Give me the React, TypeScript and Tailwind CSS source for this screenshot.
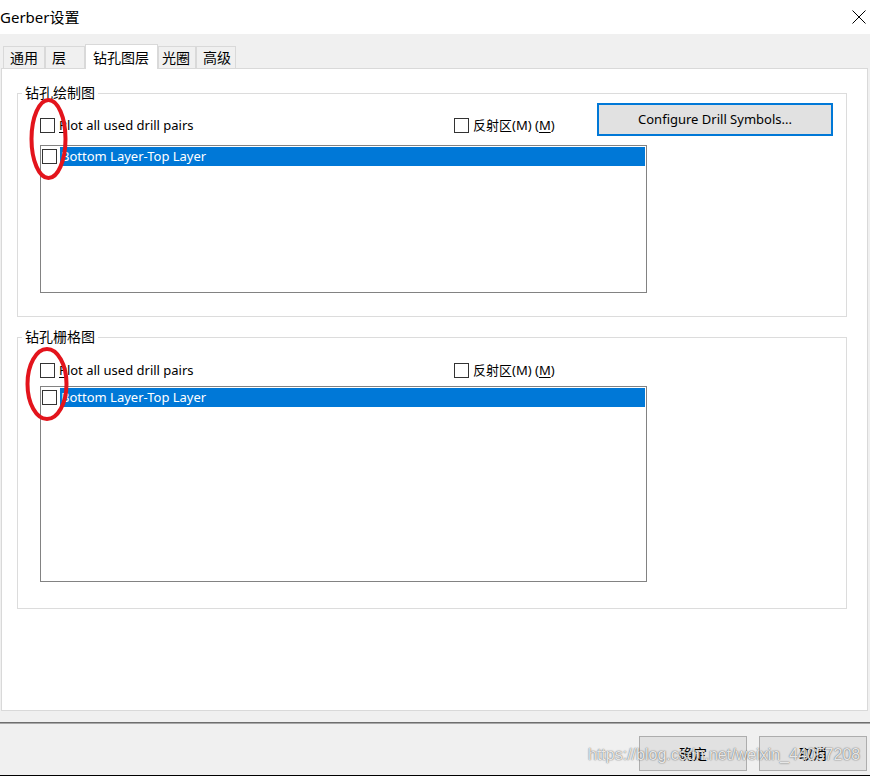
import React from "react";

type TabItem = {
  label: string;
  width: string;
  pad: string;
  active?: boolean;
};

const tabs: TabItem[] = [
  { label: "通用", width: "w-[42px]", pad: "pl-[6px]" },
  { label: "层", width: "w-[40px]", pad: "pl-[6px]" },
  { label: "钻孔图层", width: "w-[73px]", pad: "pl-[7px]", active: true },
  { label: "光圈", width: "w-[38px]", pad: "pl-[3px]" },
  { label: "高级", width: "w-[40px]", pad: "pl-[6px]" },
];

function CheckBox() {
  return <span className="inline-block h-[15px] w-[15px] shrink-0 border border-[#333333] bg-white" />;
}

function LayerList({ height }: { height: string }) {
  return (
    <div className={`w-[607px] ${height} border border-[#828282] bg-white pt-px`}>
      <div className="flex h-[19px] items-center pr-px">
        <span className="ml-[1px] flex h-[19px] items-center">
          <CheckBox />
        </span>
        <span className="ml-[3px] flex h-[19px] flex-1 items-center bg-[#0078d7] pl-[1px] text-[13px] text-white">
          Bottom Layer-Top Layer
        </span>
      </div>
    </div>
  );
}

type GroupProps = {
  title: string;
  showButton?: boolean;
  rowTop: string;
  listGap: string;
  listHeight: string;
  bottomPad: string;
  className?: string;
};

function DrillGroup({ title, showButton, rowTop, listGap, listHeight, bottomPad, className }: GroupProps) {
  return (
    <fieldset className={`ml-[15px] w-[830px] border border-[#dcdcdc] ${bottomPad} ${className ?? ""}`}>
      <legend className="ml-[4px] px-[3px] text-[14px] leading-[18px] text-black">{title}</legend>
      <div className="flex items-start pl-[22px]">
        <div className={`flex w-[414px] items-center gap-[4px] ${rowTop}`}>
          <CheckBox />
          <span className="text-[13px] leading-[15px]">
            <span className="underline underline-offset-2">P</span>lot all used drill pairs
          </span>
        </div>
        <div className={`flex w-[143px] items-center gap-[4px] ${rowTop}`}>
          <CheckBox />
          <span className="text-[13px] leading-[15px]">
            反射区(M) (<span className="underline underline-offset-2">M</span>)
          </span>
        </div>
        {showButton && (
          <button
            type="button"
            className="mt-[1px] h-[33px] w-[236px] border-2 border-[#0078d7] bg-[#e1e1e1] text-[13px] text-black"
          >
            Configure Drill Symbols...
          </button>
        )}
      </div>
      <div className={`pl-[22px] ${listGap}`}>
        <LayerList height={listHeight} />
      </div>
    </fieldset>
  );
}

export default function App() {
  return (
    <div className="relative flex h-[776px] w-[870px] flex-col overflow-hidden bg-[#f0f0f0] font-['Segoe_UI','Noto_Sans','Noto_Sans_CJK_SC',sans-serif] text-black">
      <header className="flex h-[34px] shrink-0 items-center justify-between bg-white">
        <span className="text-[15px]">Gerber设置</span>
        <svg width="14" height="14" viewBox="0 0 14 14" className="mr-[4px]">
          <path d="M0.5 0.5L13.5 13.5M13.5 0.5L0.5 13.5" stroke="#000" strokeWidth="1" />
        </svg>
      </header>

      <div className="flex h-[34px] items-end px-[3px] pt-[10px]">
        {tabs.map((tab) =>
          tab.active ? (
            <div
              key={tab.label}
              className={`relative z-10 -mb-px flex h-[25px] ${tab.width} ${tab.pad} items-center border border-b-0 border-[#d9d9d9] bg-white text-[14px]`}
            >
              {tab.label}
            </div>
          ) : (
            <div
              key={tab.label}
              className={`flex h-[22px] ${tab.width} ${tab.pad} items-center border border-b-0 border-[#d9d9d9] bg-[#f0f0f0] text-[14px]`}
            >
              {tab.label}
            </div>
          )
        )}
      </div>

      <main className="ml-[1px] h-[643px] w-[867px] border border-[#d9d9d9] bg-white pt-[15px]">
        <DrillGroup
          title="钻孔绘制图"
          showButton
          rowTop="mt-[16px]"
          listGap="mt-[9px]"
          listHeight="h-[148px]"
          bottomPad="pb-[23px]"
        />
        <DrillGroup
          title="钻孔栅格图"
          rowTop="mt-[17px]"
          listGap="mt-[8px]"
          listHeight="h-[196px]"
          bottomPad="pb-[26px]"
          className="mt-[11px]"
        />
      </main>

      <div className="mt-[11px] h-px bg-[#6e6e6e]" />
      <div className="h-px bg-[#a8a8a8]" />

      <footer className="flex flex-1 items-start justify-end gap-[12px] pr-[3px] pt-[12px]">
        <button type="button" className="h-[35px] w-[108px] border border-[#adadad] bg-[#e1e1e1] text-[14px]">
          确定
        </button>
        <button type="button" className="h-[35px] w-[108px] border border-[#adadad] bg-[#e1e1e1] text-[14px]">
          取消
        </button>
      </footer>
      <div className="h-px bg-black" />

      <svg className="pointer-events-none absolute left-[28px] top-[97px]" width="44" height="86" viewBox="0 0 44 86">
        <ellipse cx="20.5" cy="42" rx="17" ry="39" fill="none" stroke="#e3141c" strokeWidth="4" />
      </svg>
      <svg className="pointer-events-none absolute left-[24px] top-[345px]" width="48" height="80" viewBox="0 0 48 80">
        <ellipse cx="23" cy="39" rx="19.5" ry="35" fill="none" stroke="#e3141c" strokeWidth="4" />
      </svg>

      <span className="pointer-events-none absolute left-[588px] top-[745px] font-['Liberation_Sans',sans-serif] text-[16px] leading-[20px] text-white/85 [text-shadow:0_0_1px_rgba(0,0,0,0.6),0_0_2px_rgba(0,0,0,0.3)]">
        https://blog.csdn.net/weixin_44057208
      </span>
    </div>
  );
}
